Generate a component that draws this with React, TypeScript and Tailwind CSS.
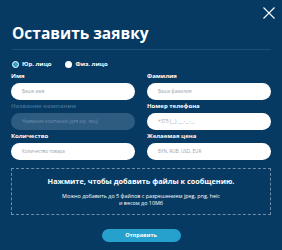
import React from "react";

const font = { fontFamily: '"Open Sans", "Noto Sans", sans-serif' };

function Field({ label, placeholder, disabled }: { label: string; placeholder: string; disabled?: boolean }) {
  return (
    <div className="flex flex-col">
      <div className={`text-[6px] leading-[8px] font-bold ${disabled ? "text-[#3f6b90]" : "text-white"}`}>{label}</div>
      <div
        className={`mt-[3px] h-[17px] rounded-full flex items-center pl-[11px] text-[4.6px] ${
          disabled ? "bg-[#2e5b80] text-[#6b8fae]" : "bg-white text-[#9aa3ab]"
        }`}
      >
        {placeholder}
      </div>
    </div>
  );
}

export default function App() {
  return (
    <div className="relative w-[282px] h-[250px] bg-[#063a63] overflow-hidden px-[11px]" style={font}>
      <button className="absolute left-[263px] top-[7px] w-[12px] h-[12px]">
        <svg viewBox="0 0 12 12" width="12" height="12">
          <path d="M0.5 0.5L11.5 11.5M11.5 0.5L0.5 11.5" stroke="white" strokeWidth="1.1" />
        </svg>
      </button>
      <div className="pt-[22px] pl-[1px] text-white text-[15.5px] leading-[22px] font-bold">Оставить заявку</div>
      <div className="mt-[5px] ml-[1px] h-px bg-[#1f4e76]" />
      <div className="mt-[11px] ml-[1px] flex items-center h-[7px] text-[6px] font-bold text-white">
        <span className="w-[7px] h-[7px] rounded-full bg-[#2aa3cf] border border-white" />
        <span className="ml-[3px]">Юр. лицо</span>
        <span className="ml-[13px] w-[7px] h-[7px] rounded-full bg-white" />
        <span className="ml-[4px]">Физ. лицо</span>
      </div>
      <div className="mt-[4px] grid grid-cols-2 gap-x-[12px] gap-y-[2px]">
        <Field label="Имя" placeholder="Ваше имя" />
        <Field label="Фамилия" placeholder="Ваша фамилия" />
        <Field label="Название компании" placeholder="Название компании (для юр. лиц)" disabled />
        <Field label="Номер телефона" placeholder="+375 (__) ___-__-__" />
        <Field label="Количество" placeholder="Количество товара" />
        <Field label="Желаемая цена" placeholder="BYN, RUB, USD, EUR" />
      </div>
      <div className="mt-[8px] h-[47px] border border-dashed border-[#6d8dab] flex flex-col items-center text-white">
        <div className="mt-[8px] text-[7.3px] leading-[9px] font-bold">Нажмите, чтобы добавить файлы к сообщению.</div>
        <div className="mt-[7px] text-[5.4px] leading-[7px] text-center">
          Можно добавить до 5 файлов с разрешением jpeg, png, heic
          <br />
          и весом до 10Мб
        </div>
      </div>
      <div className="mt-[14px] flex justify-center">
        <button className="w-[79px] h-[13px] rounded-full bg-[#26a0cc] text-white text-[5.5px] font-bold leading-[13px]">
          Отправить
        </button>
      </div>
    </div>
  );
}
